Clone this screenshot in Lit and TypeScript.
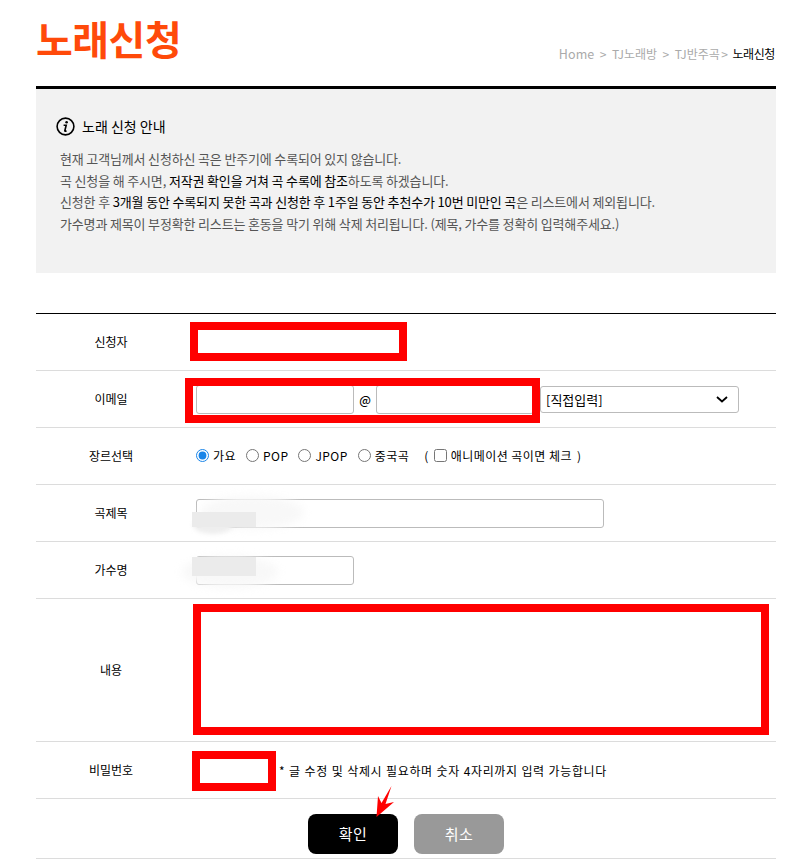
import { LitElement, html, css } from "lit";
import { customElement } from "lit/decorators.js";

@customElement("app-root")
export class AppRoot extends LitElement {
  static styles = css`
    :host { display: block; position: relative; width: 795px; height: 860px; overflow: hidden; background: #fff; font-family: "Noto Sans CJK KR", "Noto Sans", sans-serif; color: #000; }
    .wrap { margin: 0 19px 0 36px; }
    .head { height: 86px; display: flex; justify-content: space-between; align-items: flex-start; }
    h1 { margin: 9px 0 0 0; font-size: 40px; line-height: 58px; font-weight: 700; color: #ff4a0a; letter-spacing: -0.5px; }
    .crumb { margin: 45px 1px 0 0; display: flex; gap: 5.5px; font-size: 12px; line-height: 18px; color: #aaa; font-weight: 400; }
    .crumb .home { font-size: 12.5px; letter-spacing: 0.1px; }
    .crumb .tight { margin-left: -4px; }
    .crumb b { color: #000; font-weight: 400; margin-left: -1px; letter-spacing: -0.4px; }
    .notice { border-top: 3px solid #000; background: #f2f2f2; height: 187px; box-sizing: border-box; padding: 25px 20px 0; }
    .notice h2 { margin: 0; display: flex; align-items: center; gap: 7px; font-size: 14px; line-height: 24px; font-weight: 400; }
    .notice p { margin: 10px 0 0 4px; font-size: 13px; line-height: 21.7px; color: #555; letter-spacing: -0.16px; }
    .notice p b { color: #000; font-weight: 400; }
    .form { margin-top: 40px; border-top: 1px solid #000; }
    .row { display: grid; grid-template-columns: 150px 1fr; border-bottom: 1px solid #dcdcdc; height: 57px; box-sizing: border-box; align-items: center; font-size: 12px; }
    .row.tall { height: 143px; }
    .label { text-align: center; padding-bottom: 2px; }
    .cell { padding-left: 10px; display: flex; align-items: center; }
    input[type="text"], select { box-sizing: border-box; height: 29px; border: 1px solid #bbb; border-radius: 3px; background: #fff; padding: 0 6px; margin: 0; font: inherit; outline: none; }
    .w158 { width: 158px; }
    .w408 { width: 408px; }
    .at { width: 22px; text-align: center; font-size: 12px; font-weight: 500; }
    select { appearance: none; width: 199px; height: 27px; margin-left: 6px; padding-left: 5px; font-size: 13px; }
    .sel { position: relative; display: flex; }
    .sel svg { position: absolute; right: 11px; top: 10px; }
    .opts { font-size: 12px; letter-spacing: 0.45px; padding-bottom: 2px; }
    .opts label { display: inline-flex; align-items: center; }
    .opts input { margin: 0 4px 0 0; width: 13px; height: 13px; accent-color: #1a85e8; }
    .opts .g { margin-right: 10px; }
    .paren { margin-left: 5px; display: inline-flex; align-items: center; gap: 5px; }
    .pw-slot { width: 72px; }
    .hint { margin-left: 11px; font-size: 12px; letter-spacing: 0.6px; word-spacing: 0.6px; }
    .btns { display: flex; justify-content: center; gap: 16px; padding: 15px 0 4px; border-bottom: 1px solid #dcdcdc; }
    button { width: 90px; height: 40px; border: none; border-radius: 8px; color: #fff; font: inherit; font-size: 15px; letter-spacing: 0.5px; padding: 0 0 1px; }
    .ok { background: #000; }
    .cancel { background: #999; }
    .mark { position: absolute; border: 8px solid #f00; box-sizing: border-box; background: transparent; }
    .m1 { left: 190px; top: 322px; width: 217px; height: 39px; }
    .m2 { left: 185px; top: 378px; width: 355px; height: 45px; }
    .m3 { left: 193px; top: 604px; width: 576px; height: 131px; }
    .m4 { left: 192px; top: 751px; width: 84px; height: 40px; }
    .arrow { position: absolute; left: 370px; top: 785px; }
    .smudge { position: absolute; background: #ebebeb; }
    .s1 { left: 192px; top: 512px; width: 64px; height: 15px; }
    .s2 { left: 192px; top: 557px; width: 64px; height: 19px; }
    .haze { position: absolute; background: #f8f8f8; filter: blur(4px); border-radius: 50%; }
    .h1 { left: 200px; top: 496px; width: 104px; height: 33px; }
    .h2 { left: 182px; top: 556px; width: 96px; height: 32px; }
    .h3 { left: 193px; top: 516px; width: 40px; height: 18px; background: #eee; filter: blur(2px); }
  `;

  render() {
    return html`
      <div class="wrap">
        <div class="head">
          <h1>노래신청</h1>
          <div class="crumb">
            <span class="home">Home</span><span>&gt;</span><span>TJ노래방</span><span>&gt;</span><span>TJ반주곡</span><span class="tight">&gt;</span><b>노래신청</b>
          </div>
        </div>
        <section class="notice">
          <h2>
            <svg width="19" height="19" viewBox="0 0 19 19" fill="none">
              <circle cx="9.5" cy="9.5" r="8.4" stroke="#000" stroke-width="1.6"></circle>
              <circle cx="10.6" cy="5.2" r="1.3" fill="#000"></circle>
              <path d="M7.6 8.3h2.6l-1.4 5.4c-.1.6.4.7 1.7 0" stroke="#000" stroke-width="1.6" fill="none"></path>
            </svg>
            노래 신청 안내
          </h2>
          <p>
            현재 고객님께서 신청하신 곡은 반주기에 수록되어 있지 않습니다.<br />
            곡 신청을 해 주시면, <b>저작권 확인을 거쳐 곡 수록에 참조</b>하도록 하겠습니다.<br />
            신청한 후 <b>3개월 동안 수록되지 못한 곡과 신청한 후 1주일 동안 추천수가 10번 미만인 곡</b>은 리스트에서 제외됩니다.<br />
            가수명과 제목이 부정확한 리스트는 혼동을 막기 위해 삭제 처리됩니다. (제목, 가수를 정확히 입력해주세요.)
          </p>
        </section>
        <div class="form">
          <div class="row"><div class="label">신청자</div><div class="cell"></div></div>
          <div class="row">
            <div class="label">이메일</div>
            <div class="cell">
              <input type="text" class="w158" /><span class="at">@</span><input type="text" class="w158" />
              <div class="sel">
                <select><option>[직접입력]</option></select>
                <svg width="12" height="7" viewBox="0 0 12 7" fill="none"><path d="M1 1l5 4.5L11 1" stroke="#000" stroke-width="1.8"></path></svg>
              </div>
            </div>
          </div>
          <div class="row">
            <div class="label">장르선택</div>
            <div class="cell opts">
              <label class="g"><input type="radio" name="g" checked />가요</label>
              <label class="g"><input type="radio" name="g" />POP</label>
              <label class="g"><input type="radio" name="g" />JPOP</label>
              <label class="g"><input type="radio" name="g" />중국곡</label>
              <span class="paren">( <label><input type="checkbox" />애니메이션 곡이면 체크</label> )</span>
            </div>
          </div>
          <div class="row"><div class="label">곡제목</div><div class="cell"><input type="text" class="w408" /></div></div>
          <div class="row"><div class="label">가수명</div><div class="cell"><input type="text" class="w158" /></div></div>
          <div class="row tall"><div class="label">내용</div><div class="cell"></div></div>
          <div class="row">
            <div class="label">비밀번호</div>
            <div class="cell"><span class="pw-slot"></span><span class="hint">* 글 수정 및 삭제시 필요하며 숫자 4자리까지 입력 가능합니다</span></div>
          </div>
          <div class="btns">
            <button class="ok">확인</button>
            <button class="cancel">취소</button>
          </div>
        </div>
      </div>
      <div class="haze h1"></div>
      <div class="haze h2"></div>
      <div class="haze h3"></div>
      <div class="smudge s1"></div>
      <div class="smudge s2"></div>
      <div class="mark m1"></div>
      <div class="mark m2"></div>
      <div class="mark m3"></div>
      <div class="mark m4"></div>
      <svg class="arrow" width="26" height="34" viewBox="370 785 26 34">
        <path d="M391.5 786 L381.5 803 L378 796 L376.5 817 L394 802 L385.5 804 Z" fill="#f00"></path>
      </svg>
    `;
  }
}
